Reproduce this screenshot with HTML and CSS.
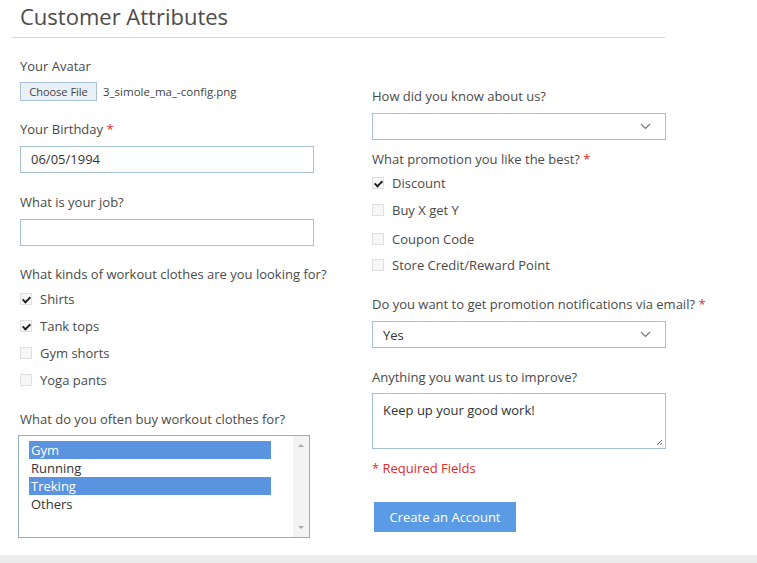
FILE: index.html
```html
<!DOCTYPE html>
<html lang="en">
<head>
<meta charset="utf-8">
<title>Customer Attributes</title>
<link rel="stylesheet" href="styles.css">
</head>
<body>
<div class="page">
  <div class="content">
    <div class="title-wrap">
      <h1 class="title">Customer Attributes</h1>
    </div>
    <div class="columns">
      <div class="col col-left">
        <div class="label lbl-avatar">Your Avatar</div>
        <div class="file-row">
          <span class="file-btn">Choose File</span>
          <span class="file-name">3_simole_ma_-config.png</span>
        </div>
        <div class="label lbl-birthday">Your Birthday <span class="req">*</span></div>
        <div class="input">06/05/1994</div>
        <div class="label lbl-job">What is your job?</div>
        <div class="input"></div>
        <div class="label lbl-kinds">What kinds of workout clothes are you looking for?</div>
        <div class="checks checks-left">
          <div class="check-row"><span class="box checked"></span><span>Shirts</span></div>
          <div class="check-row"><span class="box checked"></span><span>Tank tops</span></div>
          <div class="check-row"><span class="box"></span><span>Gym shorts</span></div>
          <div class="check-row"><span class="box"></span><span>Yoga pants</span></div>
        </div>
        <div class="label lbl-often">What do you often buy workout clothes for?</div>
        <div class="listbox">
          <div class="options">
            <div class="opt sel">Gym</div>
            <div class="opt">Running</div>
            <div class="opt sel">Treking</div>
            <div class="opt">Others</div>
          </div>
          <div class="scrollbar">
            <span class="arrow up"></span>
            <span class="arrow down"></span>
          </div>
        </div>
      </div>
      <div class="col col-right">
        <div class="label lbl-know">How did you know about us?</div>
        <div class="select">
          <span class="select-val"></span>
          <svg class="chev" width="11" height="7" viewBox="0 0 11 7"><path d="M1 1l4.5 4.5L10 1" fill="none" stroke="#777" stroke-width="1.2"/></svg>
        </div>
        <div class="label lbl-promo">What promotion you like the best? <span class="req">*</span></div>
        <div class="checks checks-right">
          <div class="check-row"><span class="box checked"></span><span>Discount</span></div>
          <div class="check-row"><span class="box"></span><span>Buy X get Y</span></div>
          <div class="check-row"><span class="box"></span><span>Coupon Code</span></div>
          <div class="check-row"><span class="box"></span><span>Store Credit/Reward Point</span></div>
        </div>
        <div class="label lbl-notify">Do you want to get promotion notifications via email? <span class="req">*</span></div>
        <div class="select">
          <span class="select-val">Yes</span>
          <svg class="chev" width="11" height="7" viewBox="0 0 11 7"><path d="M1 1l4.5 4.5L10 1" fill="none" stroke="#777" stroke-width="1.2"/></svg>
        </div>
        <div class="label lbl-improve">Anything you want us to improve?</div>
        <div class="textarea">
          <span>Keep up your good work!</span>
          <svg class="grip" width="7" height="7" viewBox="0 0 7 7"><path d="M6 1L1 6M6 4L4 6" stroke="#666" stroke-width="1"/></svg>
        </div>
        <div class="required-note">* Required Fields</div>
        <div class="actions">
          <span class="btn">Create an Account</span>
        </div>
      </div>
    </div>
  </div>
  <div class="footer-band"></div>
</div>
</body>
</html>
```
FILE: styles.css
```css
* { box-sizing: border-box; }
html, body { margin: 0; padding: 0; background: #fff; }
body {
  font-family: "Open Sans", "Liberation Sans", sans-serif;
  font-size: 13px;
  color: #4a4a4a;
}
.page {
  height: 563px;
  display: flex;
  flex-direction: column;
  overflow: hidden;
}
.content { flex: 1; }
.title-wrap {
  margin-left: 12px;
  width: 653px;
  border-bottom: 1px solid #d6d6d6;
  height: 38px;
  padding-left: 8px;
}
.title {
  margin: 0;
  padding-top: 2px;
  font-weight: 400;
  font-size: 22px;
  line-height: 28px;
  color: #4c4c4c;
}
.columns {
  display: grid;
  grid-template-columns: 294px 294px;
  column-gap: 58px;
  padding-left: 20px;
}
.label {
  line-height: 18px;
  height: 18px;
  white-space: nowrap;
}
.req { color: #e02b27; }
.lbl-avatar { margin-top: 19px; }
.file-row {
  margin-top: 7px;
  display: flex;
  align-items: center;
  height: 19px;
}
.file-btn {
  width: 77px;
  height: 19px;
  border: 1px solid #a9c1d6;
  background: #e9f0f6;
  font-size: 11px;
  line-height: 17px;
  text-align: center;
  color: #444;
}
.file-name {
  margin-left: 6px;
  font-size: 11.5px;
  color: #444;
}
.lbl-birthday { margin-top: 19px; }
.input {
  margin-top: 8px;
  height: 27px;
  border: 1px solid #a7bfd2;
  padding-left: 10px;
  line-height: 25px;
  color: #333;
}
.lbl-job { margin-top: 20px; }
.lbl-kinds { margin-top: 19px; }
.checks { display: flex; flex-direction: column; gap: 9px; }
.checks-left { margin-top: 7px; }
.check-row {
  display: flex;
  align-items: center;
  height: 18px;
}
.box {
  width: 12px;
  height: 12px;
  border: 1px solid #e0e0e0;
  background: #f6f6f6;
  margin-right: 8px;
  position: relative;
  flex: none;
}
.box.checked::after {
  content: "";
  position: absolute;
  left: 3px;
  top: 1px;
  width: 3px;
  height: 6px;
  border-right: 2px solid #222;
  border-bottom: 2px solid #222;
  transform: rotate(45deg);
}
.lbl-often { margin-top: 21px; }
.listbox {
  margin-top: 7px;
  margin-left: -2px;
  width: 292px;
  height: 103px;
  border: 1px solid #93afc8;
  display: flex;
  padding: 5px 0 0 10px;
}
.options { width: 242px; }
.opt {
  height: 18px;
  line-height: 18px;
  padding-left: 2px;
  color: #333;
}
.opt.sel { background: #5a93e0; color: #fff; }
.scrollbar {
  margin-left: auto;
  width: 16px;
  margin-top: -5px;
  height: 101px;
  background: #f3f3f3;
  position: relative;
}
.arrow {
  position: absolute;
  left: 5px;
  width: 0;
  height: 0;
  border-left: 3px solid transparent;
  border-right: 3px solid transparent;
}
.arrow.up { top: 8px; border-bottom: 3px solid #aaa; }
.arrow.down { bottom: 8px; border-top: 3px solid #aaa; }

.lbl-know { margin-top: 49px; }
.select {
  margin-top: 8px;
  height: 27px;
  border: 1px solid #a7bfd2;
  display: flex;
  align-items: center;
  padding: 0 14px 0 10px;
  color: #333;
}
.select-val { flex: 1; }
.lbl-promo { margin-top: 10px; }
.checks-right { margin-top: 6px; }
.checks-right .check-row:nth-child(3) { margin-top: 2px; }
.checks-right .check-row:nth-child(4) { margin-top: -1px; }
.lbl-notify { margin-top: 21px; }
.lbl-improve { margin-top: 20px; }
.textarea {
  margin-top: 7px;
  height: 56px;
  border: 1px solid #a7bfd2;
  padding: 7px 10px;
  position: relative;
  color: #333;
}
.grip { position: absolute; right: 2px; bottom: 2px; }
.required-note {
  margin-top: 10px;
  line-height: 18px;
  color: #e02b27;
}
.actions { margin-top: 25px; padding-left: 2px; }
.btn {
  display: inline-block;
  width: 142px;
  height: 30px;
  line-height: 30px;
  text-align: center;
  background: #5b9be6;
  color: #fff;
  font-size: 13px;
}
.footer-band {
  height: 8px;
  background: #ececec;
}
```
